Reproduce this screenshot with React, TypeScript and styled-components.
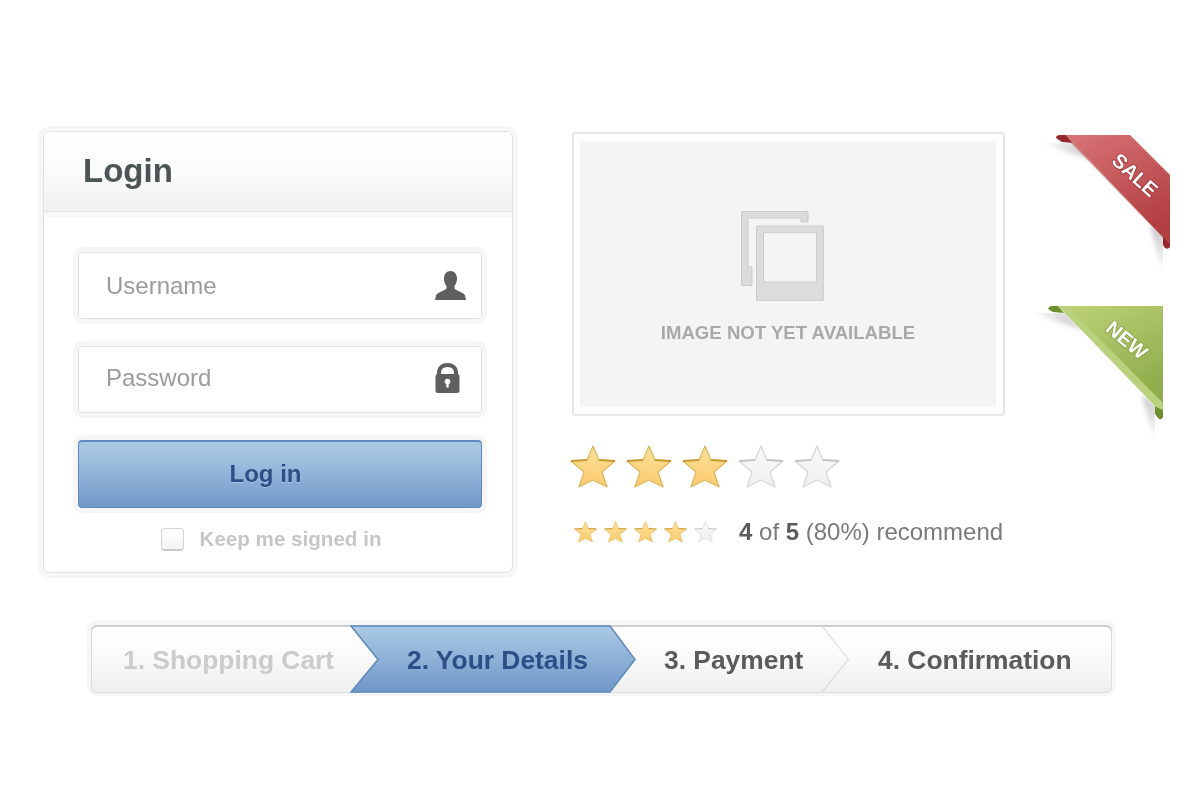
import { useId } from 'react';
import styled, { createGlobalStyle } from 'styled-components';

const GlobalStyle = createGlobalStyle`
  html, body {
    margin: 0;
    padding: 0;
    background: #ffffff;
    font-family: "Liberation Sans", Arial, sans-serif;
  }
`;

const Page = styled.div`
  width: 1200px;
  height: 800px;
  overflow: hidden;
  padding: 131px 0 0 43px;
  box-sizing: border-box;
  filter: blur(0.45px);
`;

const TopRow = styled.div`
  display: flex;
  align-items: flex-start;
`;

const LoginCard = styled.form`
  width: 470px;
  height: 442px;
  box-sizing: border-box;
  border: 1px solid #e0e0e0;
  border-radius: 7px;
  box-shadow: 0 0 0 5px #f6f6f6;
  background: #ffffff;
  overflow: hidden;
  flex-shrink: 0;
`;

const CardHeader = styled.div`
  height: 77px;
  display: flex;
  align-items: center;
  padding: 0 0 2px 39px;
  background: linear-gradient(#ffffff 0%, #fbfbfb 45%, #f1f1f1 100%);
  border-bottom: 1px solid #e5e5e5;
  box-shadow: 0 5px 0 #f7f7f7;
`;

const CardTitle = styled.h2`
  margin: 0;
  font-size: 33px;
  font-weight: 700;
  color: #4c5456;
`;

const CardBody = styled.div`
  padding: 40px 30px 0 34px;
  display: flex;
  flex-direction: column;
`;

const Field = styled.label<{ $lift: number }>`
  height: 67px;
  box-sizing: border-box;
  display: flex;
  align-items: center;
  padding: 0 15px ${props => props.$lift}px 27px;
  margin-bottom: 27px;
  border: 1px solid #dfdfdf;
  border-radius: 4px;
  box-shadow: 0 0 0 5px #f6f6f6;
  background: #ffffff;
`;

const FieldInput = styled.input`
  flex: 1;
  min-width: 0;
  border: none;
  outline: none;
  padding: 0;
  background: transparent;
  font: 24px "Liberation Sans", Arial, sans-serif;

  &::placeholder {
    color: #9b9b9b;
    opacity: 1;
  }
`;

const FieldIcon = styled.span`
  width: 31px;
  display: flex;
  align-items: center;
`;

const LoginButton = styled.button`
  height: 68px;
  box-sizing: border-box;
  border: 1px solid #5f88be;
  border-top-width: 2px;
  border-radius: 4px;
  box-shadow: 0 0 0 5px #f6f6f6;
  background: linear-gradient(#a9c8e4 0%, #a4c3e1 20%, #7097c9 100%);
  font: 700 24px "Liberation Sans", Arial, sans-serif;
  color: #2b4f86;
  text-shadow: 0 1px 1px rgba(255, 255, 255, 0.3);
  padding: 0 29px 2px 0;
`;

const KeepRow = styled.div`
  display: flex;
  align-items: center;
  justify-content: center;
  margin-top: 19px;
  padding-right: 18px;
  gap: 16px;
`;

const KeepBox = styled.input`
  appearance: none;
  width: 23px;
  height: 23px;
  margin: 0;
  border: 1px solid #d4d4d4;
  border-bottom: 2px solid #c9c9c9;
  border-radius: 4px;
  background: linear-gradient(#ffffff, #f3f3f3);
`;

const KeepLabel = styled.span`
  font-size: 20.6px;
  font-weight: 700;
  color: #c6c6c6;
`;

const ProductColumn = styled.div`
  width: 433px;
  margin-left: 59px;
  flex-shrink: 0;
`;

const ImageFrame = styled.div`
  height: 284px;
  margin-top: 1px;
  box-sizing: border-box;
  padding: 7px 7px 7px 6px;
  border: 2px solid #e6e6e6;
  border-radius: 3px;
`;

const ImagePlaceholder = styled.div`
  height: 100%;
  box-sizing: border-box;
  padding-top: 70px;
  background: #f4f4f4;
  display: flex;
  flex-direction: column;
  align-items: center;
  gap: 21px;
`;

const PlaceholderArt = styled.svg`
  margin-right: 12px;
`;

const PlaceholderText = styled.span`
  font-size: 18.6px;
  font-weight: 700;
  color: #a9a9a9;
`;

const StarRow = styled.div<{ $gap: number }>`
  display: flex;
  gap: ${props => props.$gap}px;
`;

const BigStars = styled(StarRow)`
  margin: 29px 0 0 -2px;
`;

const RecommendRow = styled.div`
  display: flex;
  align-items: center;
  gap: 22px;
  margin: 30px 0 0 2px;
  white-space: nowrap;
`;

const RecommendText = styled.span`
  font-size: 24px;
  color: #7a7a7a;

  b {
    color: #5c5c5c;
  }
`;

const RibbonColumn = styled.div`
  margin-left: 15px;
  display: flex;
  flex-direction: column;
  gap: 19px;
  flex-shrink: 0;
`;

const RibbonLabel = styled.text`
  font-size: 20px;
  font-weight: 700;
  fill: #ffffff;
  text-anchor: middle;
  paint-order: stroke;
  stroke-width: 1.6px;
`;

const StepBar = styled.div`
  width: 1021px;
  height: 68px;
  margin: 52px 0 0 48px;
  display: flex;
  border-radius: 6px;
  background: linear-gradient(#ffffff 0%, #fbfbfb 40%, #efefef 100%);
  box-shadow:
    inset 0 2px 0 #cdcdcd,
    inset 0 0 0 1px #dcdcdc,
    0 -1px 0 4px #f6f6f6;
`;

const Step = styled.div<{ $width: number; $tone: 'done' | 'active' | 'todo'; $pad: number }>`
  position: relative;
  box-sizing: border-box;
  width: ${props => props.$width}px;
  flex-shrink: 0;
  display: flex;
  align-items: center;
  padding: 3px 0 0 ${props => props.$pad}px;
  font-size: 26.4px;
  font-weight: 700;
  white-space: nowrap;
  color: ${props =>
    props.$tone === 'done' ? '#cbcbcb' : props.$tone === 'active' ? '#2b4f86' : '#5b5b5b'};
`;

const StepLabel = styled.span`
  position: relative;
`;

const StepShape = styled.svg`
  position: absolute;
  top: 0;
  left: 0;
`;

const StepDivider = styled.svg`
  position: absolute;
  top: 0;
  right: 0;
`;

const UserIcon = () => (
  <svg width="31" height="29" viewBox="0 0 31 29" fill="#5f5f5f">
    <path d="M15.500 0C11.500 0 9 3 9 7.500 9 10.500 10 13.500 11.500 15V17.500C9 20 2.500 21 1 24.500L0 29H31L30 24.500C28.500 21 22 20 19.500 17.500V15C21 13.500 22 10.500 22 7.500 22 3 19.500 0 15.500 0Z" />
  </svg>
);

const LockIcon = () => (
  <svg width="25" height="30" viewBox="0 0 25 30">
    <path
      d="M4 13V10C4 4.500 7.500 2 12.500 2S21 4.500 21 10V13"
      fill="none"
      stroke="#5f5f5f"
      strokeWidth="4"
    />
    <rect x="0.500" y="11" width="24" height="19" rx="2.500" fill="#5f5f5f" />
    <circle cx="12.500" cy="18.500" r="2.800" fill="#ffffff" />
    <rect x="11.300" y="18.500" width="2.400" height="6" fill="#ffffff" />
  </svg>
);

const PhotoIcon = () => (
  <PlaceholderArt width="83" height="90" viewBox="0 0 83 90">
    <path
      d="M.5.5H67V11H60V7H7V56H11V74.500H.5Z"
      fill="#dcdcdc"
      stroke="#cacaca"
    />
    <path
      d="M15.500 15H82.300V89.300H15.500ZM22.500 21.700V71H75.700V21.700Z"
      fill="#dcdcdc"
      stroke="#cacaca"
      fillRule="evenodd"
    />
  </PlaceholderArt>
);

const Star = ({ filled, size }: { filled: boolean; size: number }) => {
  const id = useId();
  const stops = filled ? ['#fbe09b', '#fccb6c'] : ['#f8f8f8', '#f0f0f0'];
  return (
    <svg width={size} height={size * (43 / 46)} viewBox="0 0 46 43">
      <defs>
        <linearGradient id={id} x1="0" y1="0" x2="0" y2="1">
          <stop offset="0" stopColor={stops[0]} />
          <stop offset="1" stopColor={stops[1]} />
        </linearGradient>
      </defs>
      <polygon
        points="23,1 29,15 45,16 32,27 37,42 23,35 9,42 14,27 1,16 17,15"
        fill={`url(#${id})`}
        stroke={filled ? '#e0b85c' : '#d6d6d6'}
        strokeWidth="1.300"
        strokeLinejoin="round"
      />
      <path
        d="M1 16L17 15M29 15L45 16"
        fill="none"
        stroke={filled ? '#c99a31' : '#c6c6c6'}
        strokeWidth="1.800"
      />
    </svg>
  );
};

const SaleRibbon = () => (
  <svg width="170" height="150" viewBox="1020 131 170 150">
    <defs>
      <linearGradient id="saleFill" x1="0" y1="0" x2="0.5" y2="1">
        <stop offset="0" stopColor="#d97476" />
        <stop offset="1" stopColor="#b33f42" />
      </linearGradient>
      <linearGradient id="saleTopShadow" x1="0" y1="0" x2="1" y2="0">
        <stop offset="0" stopColor="#000" stopOpacity="0" />
        <stop offset="1" stopColor="#000" stopOpacity="0.22" />
      </linearGradient>
      <linearGradient id="saleSideShadow" x1="0" y1="0" x2="0" y2="1">
        <stop offset="0" stopColor="#000" stopOpacity="0.22" />
        <stop offset="1" stopColor="#000" stopOpacity="0" />
      </linearGradient>
      <filter id="ribbonBlur" x="-40%" y="-40%" width="180%" height="180%">
        <feGaussianBlur stdDeviation="2" />
      </filter>
      <clipPath id="saleClip">
        <rect x="1020" y="143" width="143" height="130" />
      </clipPath>
    </defs>
    <g clipPath="url(#saleClip)">
      <polygon points="1040,141 1074,141 1092,160 1060,150" fill="url(#saleTopShadow)" filter="url(#ribbonBlur)" />
      <polygon points="1150,225 1166,236 1166,272 1158,260" fill="url(#saleSideShadow)" filter="url(#ribbonBlur)" />
    </g>
    <path d="M1056 138Q1056 135 1060 135L1066 135 1073 143 1062 142Z" fill="#97282c" />
    <path d="M1163 236L1170 242V247Q1168 250 1165 248L1163 245Z" fill="#97282c" />
    <polygon points="1066,135 1130,135 1170,175 1170,244 1163,237 1073,143" fill="url(#saleFill)" />
    <polyline points="1072,143 1164,238" fill="none" stroke="#a83538" strokeOpacity="0.45" strokeWidth="1.500" />
    <RibbonLabel x="1135" y="182" transform="rotate(42 1135 175)" stroke="#a03336">
      SALE
    </RibbonLabel>
  </svg>
);

const NewRibbon = () => (
  <svg width="170" height="150" viewBox="1020 300 170 150">
    <defs>
      <linearGradient id="newFill" x1="0" y1="0" x2="0.5" y2="1">
        <stop offset="0" stopColor="#bdd177" />
        <stop offset="1" stopColor="#90ae4c" />
      </linearGradient>
      <linearGradient id="newTopShadow" x1="0" y1="0" x2="1" y2="0">
        <stop offset="0" stopColor="#000" stopOpacity="0" />
        <stop offset="1" stopColor="#000" stopOpacity="0.22" />
      </linearGradient>
      <linearGradient id="newSideShadow" x1="0" y1="0" x2="0" y2="1">
        <stop offset="0" stopColor="#000" stopOpacity="0.22" />
        <stop offset="1" stopColor="#000" stopOpacity="0" />
      </linearGradient>
      <filter id="newBlur" x="-40%" y="-40%" width="180%" height="180%">
        <feGaussianBlur stdDeviation="2" />
      </filter>
      <clipPath id="newClip">
        <rect x="1020" y="313" width="135" height="130" />
      </clipPath>
    </defs>
    <g clipPath="url(#newClip)">
      <polygon points="1028,311 1064,311 1082,330 1052,320" fill="url(#newTopShadow)" filter="url(#newBlur)" />
      <polygon points="1142,395 1158,406 1158,440 1150,428" fill="url(#newSideShadow)" filter="url(#newBlur)" />
    </g>
    <path d="M1048 309Q1049 306 1052 306L1058 306 1064 313 1053 312Z" fill="#6d8f2c" />
    <path d="M1155 406L1163 409V417Q1161 421 1158 418L1155 414Z" fill="#6d8f2c" />
    <polygon points="1058,306 1163,306 1163,410 1156,407" fill="#b9d07c" />
    <polygon points="1067,306 1163,306 1163,403" fill="url(#newFill)" />
    <RibbonLabel x="1127" y="347" transform="rotate(40 1127 340)" stroke="#84a344">
      NEW
    </RibbonLabel>
  </svg>
);

const App = () => (
  <>
    <GlobalStyle />
    <Page>
      <TopRow>
        <LoginCard>
          <CardHeader>
            <CardTitle>Login</CardTitle>
          </CardHeader>
          <CardBody>
            <Field $lift={0}>
              <FieldInput placeholder="Username" />
              <FieldIcon>
                <UserIcon />
              </FieldIcon>
            </Field>
            <Field $lift={4}>
              <FieldInput placeholder="Password" />
              <FieldIcon>
                <LockIcon />
              </FieldIcon>
            </Field>
            <LoginButton type="button">Log in</LoginButton>
            <KeepRow>
              <KeepBox type="checkbox" />
              <KeepLabel>Keep me signed in</KeepLabel>
            </KeepRow>
          </CardBody>
        </LoginCard>

        <ProductColumn>
          <ImageFrame>
            <ImagePlaceholder>
              <PhotoIcon />
              <PlaceholderText>IMAGE NOT YET AVAILABLE</PlaceholderText>
            </ImagePlaceholder>
          </ImageFrame>
          <BigStars $gap={10}>
            {[true, true, true, false, false].map((filled, i) => (
              <Star key={i} filled={filled} size={46} />
            ))}
          </BigStars>
          <RecommendRow>
            <StarRow $gap={7}>
              {[true, true, true, true, false].map((filled, i) => (
                <Star key={i} filled={filled} size={23} />
              ))}
            </StarRow>
            <RecommendText>
              <b>4</b> of <b>5</b> (80%) recommend
            </RecommendText>
          </RecommendRow>
        </ProductColumn>

        <RibbonColumn>
          <SaleRibbon />
          <NewRibbon />
        </RibbonColumn>
      </TopRow>

      <StepBar>
        <Step $width={259} $tone="done" $pad={32}>
          1. Shopping Cart
        </Step>
        <Step $width={286} $tone="active" $pad={57}>
          <StepShape width="286" height="68" viewBox="0 0 286 68">
            <defs>
              <linearGradient id="activeStep" x1="0" y1="0" x2="0" y2="1">
                <stop offset="0" stopColor="#abcae5" />
                <stop offset="1" stopColor="#7097c9" />
              </linearGradient>
            </defs>
            <polygon
              points="1,1 260,1 285,34.500 260,67 1,67 28,34.500"
              fill="url(#activeStep)"
              stroke="#5f88be"
              strokeWidth="1.500"
            />
          </StepShape>
          <StepLabel>2. Your Details</StepLabel>
        </Step>
        <Step $width={213} $tone="todo" $pad={28}>
          3. Payment
          <StepDivider width="30" height="68" viewBox="0 0 30 68">
            <polyline points="3,1 29.500,34.500 3,67" fill="none" stroke="#dddddd" strokeWidth="1.200" />
          </StepDivider>
        </Step>
        <Step $width={263} $tone="todo" $pad={29}>
          4. Confirmation
        </Step>
      </StepBar>
    </Page>
  </>
);

export default App;
